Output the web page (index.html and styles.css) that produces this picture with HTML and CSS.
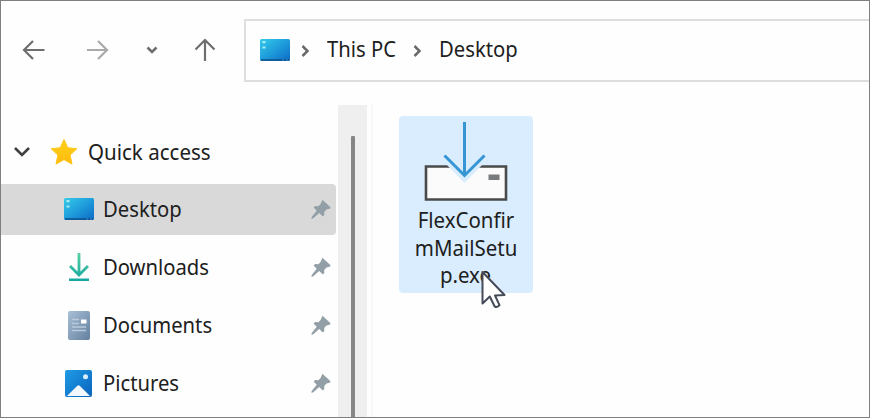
FILE: index.html
```html
<!DOCTYPE html>
<html lang="en">
<head>
<meta charset="utf-8">
<title>Desktop</title>
<link rel="stylesheet" href="styles.css">
</head>
<body>
<svg class="defs" width="0" height="0" aria-hidden="true">
  <defs>
    <linearGradient id="blue" x1="0" y1="0" x2="1" y2="1"><stop offset="0" stop-color="#35cbe8"/><stop offset=".5" stop-color="#1e9cdb"/><stop offset="1" stop-color="#0d6ac4"/></linearGradient>
    <linearGradient id="green" x1="0" y1="0" x2="0" y2="1"><stop offset="0" stop-color="#59d0a0"/><stop offset="1" stop-color="#16a7a3"/></linearGradient>
    <linearGradient id="slate" x1="0" y1="0" x2="1" y2="1"><stop offset="0" stop-color="#a9bfd5"/><stop offset="1" stop-color="#63809f"/></linearGradient>
    <linearGradient id="photo" x1="0" y1="0" x2="1" y2="1"><stop offset="0" stop-color="#209be4"/><stop offset="1" stop-color="#0863bd"/></linearGradient>
    <linearGradient id="gold" x1="0" y1="0" x2="0" y2="1"><stop offset="0" stop-color="#ffd21c"/><stop offset="1" stop-color="#ffb90b"/></linearGradient>
    <symbol id="desktop" viewBox="0 0 30 22">
      <rect width="30" height="22" rx="1.5" fill="url(#blue)"/>
      <path d="M1 21h28" stroke="#0b4f8c" stroke-width="1.5"/>
      <path d="M2.5 3.2h3M2.5 8.5h3" stroke="#a5ecf5" stroke-width="2.2"/>
      <path d="M22 21h2M26 21h2" stroke="#3b91d5"/>
    </symbol>
    <symbol id="pin" viewBox="0 0 20 20">
      <path d="M11.4.7 19.3 8v1.5l-3.8 1-2.3 2.4.1 3.2-1.4 1.3-3.7-3.5L2 19.4.4 19.7.7 18l5-6.2L2.6 8.4l1.5-1.3 3.4.1L9.7 4.8z" fill="#929fa7"/>
    </symbol>
  </defs>
</svg>
<div class="window">
  <header class="toolbar">
    <nav class="nav">
      <svg class="back" width="24" height="22" viewBox="0 0 24 22"><path d="M22.500 11H2M11 2 2 11l9 9"/></svg>
      <svg class="forward" width="24" height="22" viewBox="0 0 24 22"><path d="M1 11h21M12 2l9 9-9 9"/></svg>
      <svg class="recent" width="12" height="8" viewBox="0 0 12 8"><path d="m1.500 1.500 4.500 4.500 4.500-4.500"/></svg>
      <svg class="up" width="22" height="24" viewBox="0 0 22 24"><path d="M11 23V2M1.500 11.500 11 2l9.500 9.500"/></svg>
    </nav>
    <div class="address">
      <svg class="place" width="30" height="22"><use href="#desktop"/></svg>
      <svg class="crumb-arrow" width="8" height="12" viewBox="0 0 8 12"><path d="m1.500 1 5 5-5 5"/></svg>
      <span class="crumb pc"><span class="text">This PC</span></span>
      <svg class="crumb-arrow" width="8" height="12" viewBox="0 0 8 12"><path d="m1.500 1 5 5-5 5"/></svg>
      <span class="crumb"><span class="text">Desktop</span></span>
    </div>
  </header>
  <main class="content">
    <aside class="sidebar">
      <div class="group">
        <svg class="chevron" width="16" height="10" viewBox="0 0 16 10"><path d="m1 1 7 7 7-7"/></svg>
        <svg class="star" width="28" height="28" viewBox="0 0 28 28"><path d="m14 1.500 3.700 8.200 9.100 1.100-6.700 6.300 1.900 9-8-4.500-8 4.500 1.900-9-6.700-6.300 9.100-1.100z" fill="url(#gold)" stroke="#ffc514" stroke-linejoin="round"/></svg>
        <span class="text">Quick access</span>
      </div>
      <div class="item selected">
        <span class="icon"><svg width="30" height="22"><use href="#desktop"/></svg></span>
        <span class="text">Desktop</span><svg class="pin" width="20" height="20"><use href="#pin"/></svg>
      </div>
      <div class="item">
        <span class="icon"><svg width="22" height="28" viewBox="0 0 22 28"><path d="M11 0v21M2 13l9 9 9-9M1 27h20" fill="none" stroke="url(#green)" stroke-width="2.800"/></svg></span>
        <span class="text">Downloads</span><svg class="pin" width="20" height="20"><use href="#pin"/></svg>
      </div>
      <div class="item">
        <span class="icon"><svg width="22" height="29" viewBox="0 0 22 29"><rect width="22" height="29" rx="2" fill="url(#slate)"/><path d="M4 8.500h7M4 12.500h7M4 16h14M4 19.500h14" stroke="#b9c9da" stroke-width="1.400"/><path d="M13 8.500h5.500v4H13z" fill="#fff"/></svg></span>
        <span class="text">Documents</span><svg class="pin" width="20" height="20"><use href="#pin"/></svg>
      </div>
      <div class="item">
        <span class="icon"><svg width="27" height="27" viewBox="0 0 27 27"><rect width="27" height="27" rx="2" fill="url(#photo)"/><path d="m2 26 10.300-10.300q1.200-1 2.400 0L25 26z" fill="#f2f8fd"/><circle cx="20.500" cy="6.800" r="2.500" fill="#d8f0fc"/></svg></span>
        <span class="text">Pictures</span><svg class="pin" width="20" height="20"><use href="#pin"/></svg>
      </div>
    </aside>
    <div class="scrollbar"><div class="thumb"></div></div>
    <section class="files">
      <div class="file">
        <svg class="setup" width="84" height="80" viewBox="0 0 84 80">
          <path d="M2 44.500h80v33H2z" fill="#fbfbfb" stroke="#4a4a4a" stroke-width="2.600"/>
          <path d="M40.500 61 22.500 42.500h36z" fill="#d9edfe"/>
          <path d="M64.500 52.500h11v5.500h-11z" fill="#777b7d"/>
          <path d="M40.500 0v54M20.500 33.500l20 20 20-20" fill="none" stroke="#3695d3" stroke-width="3"/>
        </svg>
        <div class="filename"><span>FlexConfir</span><span>mMailSetu</span><span>p.exe</span></div>
        <svg class="cursor" width="26" height="40" viewBox="0 0 26 40"><path d="M1.500 2v31.500l7.300-7 4.900 10q2.700 1.300 4.800-1.300L14 25.500l9.500-.5z" fill="#fff" stroke="#454b58" stroke-width="2" stroke-linejoin="round"/></svg>
      </div>
    </section>
  </main>
</div>
</body>
</html>
```
FILE: styles.css
```css
* { box-sizing: border-box; }
body {
  margin: 0;
  background: #fff;
  color: #202020;
  font-family: "Noto Sans", "Open Sans", sans-serif;
  font-size: 22px;
  line-height: 28px;
}
svg { display: block; flex: none; }
.defs { position: absolute; }
.window {
  width: 870px;
  height: 418px;
  border: 1px solid #7f7f7f;
  background: #fefefe;
  overflow: hidden;
}
.toolbar { display: flex; height: 104px; padding-top: 18px; }
.nav { display: flex; align-items: center; width: 243px; height: 62px; padding-left: 21px; }
.nav svg { fill: none; stroke: #6e6e6e; stroke-width: 2.2; }
.nav .forward { margin-left: 40px; stroke: #aaa; }
.nav .recent { margin-left: 36px; stroke-width: 2.6; }
.nav .up { margin-left: 36px; }
.address {
  display: flex;
  align-items: center;
  flex: 1;
  height: 63px;
  padding: 0 0 2px 14px;
  border: 2px solid #dedede;
  border-right: 0;
}
.crumb-arrow { margin: 3px 0 0 11px; fill: none; stroke: #6a6a6a; stroke-width: 2.5; }
.crumb { margin-left: 18px; }
.pc { width: 75px; }
.text { display: inline-block; padding-bottom: 3px; white-space: nowrap; transform: scaleX(.92); transform-origin: left center; }
.group .text { transform: scaleX(.933); }
.content { display: flex; height: 312px; }
.sidebar { width: 337px; padding-top: 18px; }
.group { display: flex; align-items: center; height: 58px; padding-left: 13px; }
.chevron { fill: none; stroke: #3f3f3f; stroke-width: 2.600; }
.star { margin: 0 10px 0 20px; }
.item {
  display: flex;
  align-items: center;
  width: 335px;
  height: 51px;
  margin: 3px 0 7px;
  padding: 0 5px 1px 62px;
  border-radius: 0 4px 4px 0;
}
.selected { background: #d9d9d9; }
.icon { display: flex; justify-content: center; width: 31px; margin-right: 9px; }
.pin { margin-left: auto; }
.scrollbar { display: flex; justify-content: center; width: 29px; padding-top: 31px; background: #efefef; }
.thumb { width: 4px; background: #868686; border-radius: 1px 1px 0 0; }
.files { flex: 1; margin-left: 4px; padding: 11px 0 0 26px; border-left: 2px solid #f8f8f8; }
.file { position: relative; width: 134px; height: 177px; padding-top: 6px; border-radius: 4px; background: #d9edfe; }
.setup { margin-left: 25px; }
.filename { display: flex; flex-direction: column; align-items: center; margin-top: 4px; line-height: 27.500px; }
.filename span { transform: scaleX(.93); }
.cursor { position: absolute; left: 82px; top: 154px; }
```
